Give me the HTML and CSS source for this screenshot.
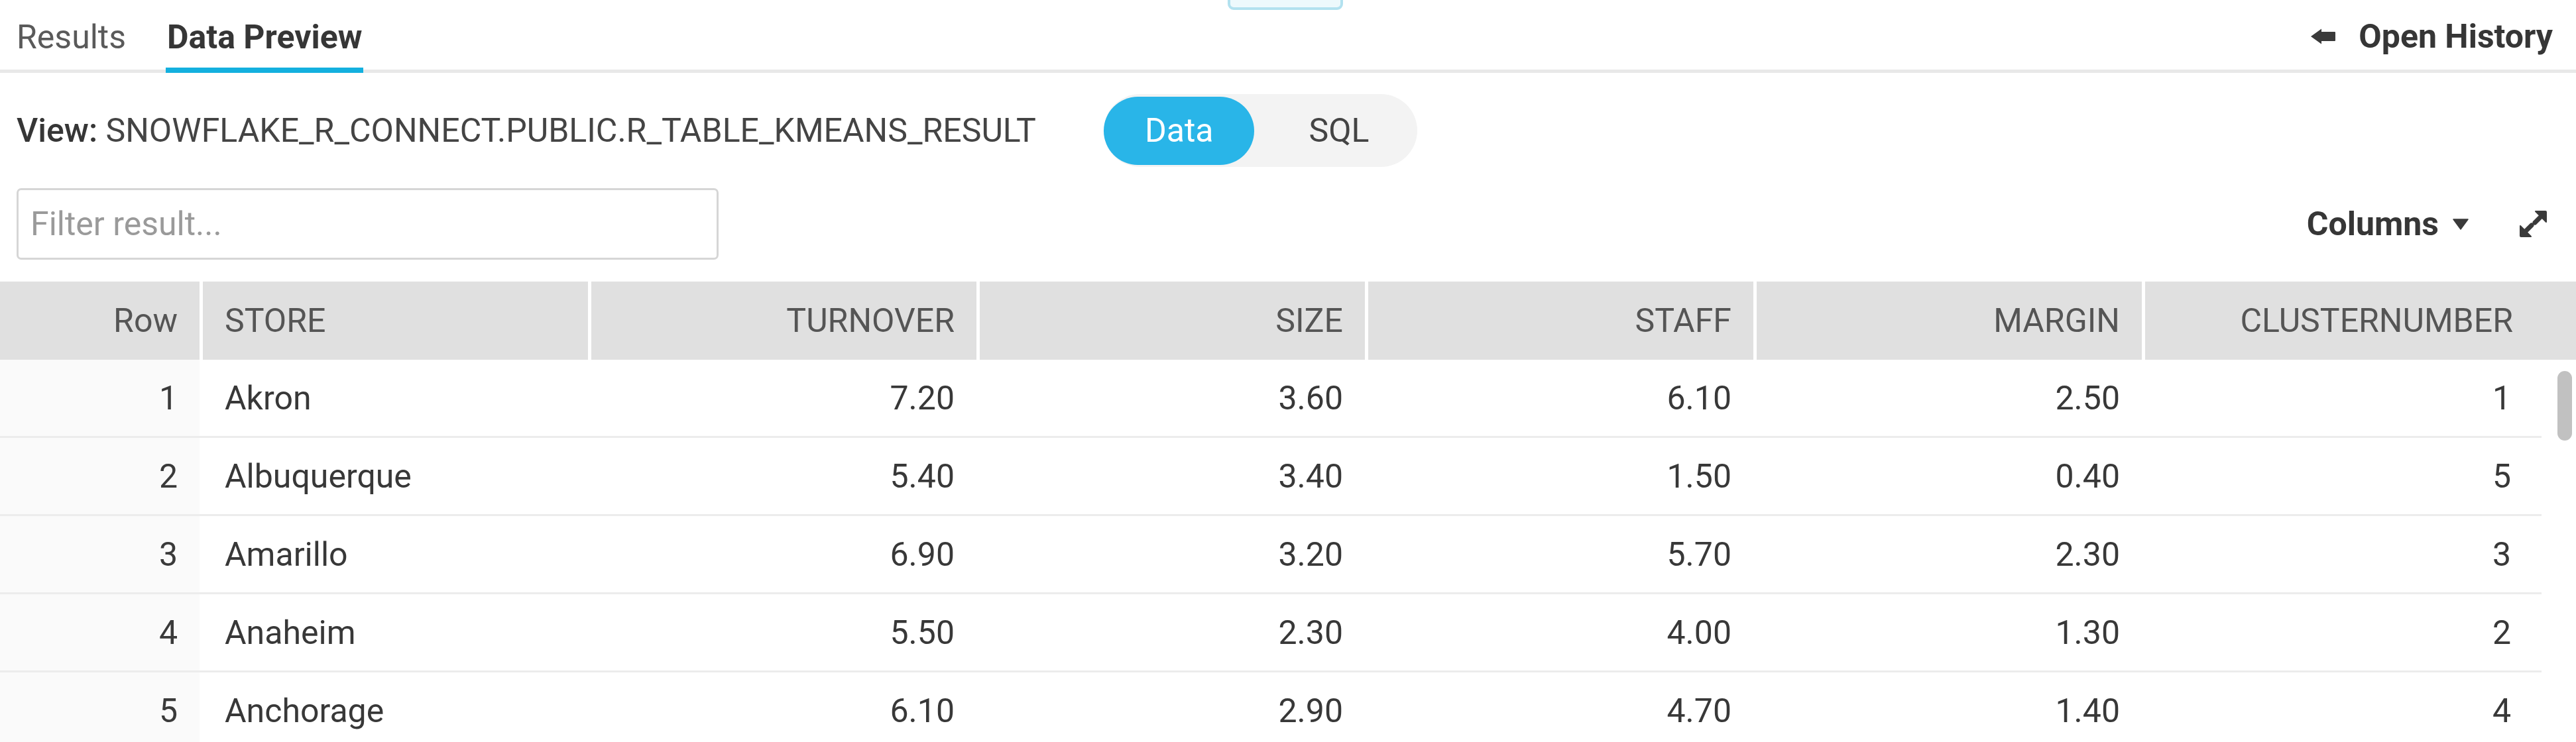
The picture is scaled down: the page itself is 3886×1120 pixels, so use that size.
FILE: index.html
```html
<!DOCTYPE html>
<html lang="en">
<head>
<meta charset="utf-8">
<title>Data Preview</title>
<link rel="stylesheet" href="styles.css">
</head>
<body>
<div class="app">
  <div class="tip"></div>

  <div class="tabs">
    <div class="tab-list">
      <div class="tab">Results</div>
      <div class="tab active">Data Preview</div>
    </div>
    <div class="history">
      <svg class="arrow" viewBox="0 0 38 26" width="38" height="26"><path d="M1 13 L17 1.5 L17 6 L37 6 Q38 6 38 7 L38 19 Q38 20 37 20 L17 20 L17 24.5 Z" fill="#3a3a3a"/></svg>
      <span>Open History</span>
    </div>
  </div>

  <div class="viewbar">
    <div class="view-label"><span class="view-key">View:</span> SNOWFLAKE_R_CONNECT.PUBLIC.R_TABLE_KMEANS_RESULT</div>
    <div class="toggle">
      <span class="seg on">Data</span>
      <span class="seg sql">SQL</span>
    </div>
  </div>

  <div class="toolbar">
    <input class="filter" type="text" placeholder="Filter result...">
    <div class="tools">
      <div class="columns">
        <span>Columns</span>
        <svg viewBox="0 0 24 17" width="24" height="17"><path d="M1 1 L23 1 L12 16 Z" fill="#3a3a3a" stroke="#3a3a3a" stroke-width="1.5" stroke-linejoin="round"/></svg>
      </div>
      <svg class="expand" viewBox="0 0 41 40" width="41" height="40">
        <path d="M24 1 L39 1 Q40 1 40 2 L40 17 Z" fill="#3a3a3a" stroke="#3a3a3a" stroke-width="2" stroke-linejoin="round"/>
        <line x1="33" y1="8" x2="23" y2="18" stroke="#3a3a3a" stroke-width="7" stroke-linecap="round"/>
        <path d="M1 23 L1 38 Q1 39 2 39 L17 39 Z" fill="#3a3a3a" stroke="#3a3a3a" stroke-width="2" stroke-linejoin="round"/>
        <line x1="8" y1="32" x2="18" y2="22" stroke="#3a3a3a" stroke-width="7" stroke-linecap="round"/>
      </svg>
    </div>
  </div>

  <div class="table">
    <div class="thead">
      <div class="th num">Row</div>
      <div class="th">STORE</div>
      <div class="th num">TURNOVER</div>
      <div class="th num">SIZE</div>
      <div class="th num">STAFF</div>
      <div class="th num">MARGIN</div>
      <div class="th num">CLUSTERNUMBER</div>
    </div>
    <div class="tbody">
      <div class="tr"><div class="td rn">1</div><div class="td txt">Akron</div><div class="td">7.20</div><div class="td">3.60</div><div class="td">6.10</div><div class="td">2.50</div><div class="td">1</div></div>
      <div class="tr"><div class="td rn">2</div><div class="td txt">Albuquerque</div><div class="td">5.40</div><div class="td">3.40</div><div class="td">1.50</div><div class="td">0.40</div><div class="td">5</div></div>
      <div class="tr"><div class="td rn">3</div><div class="td txt">Amarillo</div><div class="td">6.90</div><div class="td">3.20</div><div class="td">5.70</div><div class="td">2.30</div><div class="td">3</div></div>
      <div class="tr"><div class="td rn">4</div><div class="td txt">Anaheim</div><div class="td">5.50</div><div class="td">2.30</div><div class="td">4.00</div><div class="td">1.30</div><div class="td">2</div></div>
      <div class="tr"><div class="td rn">5</div><div class="td txt">Anchorage</div><div class="td">6.10</div><div class="td">2.90</div><div class="td">4.70</div><div class="td">1.40</div><div class="td">4</div></div>
      <div class="thumb"></div>
    </div>
  </div>
</div>
</body>
</html>
```

FILE: styles.css
```css
html, body {
  margin: 0;
  padding: 0;
  overflow: hidden;
  background: #ffffff;
}

body {
  width: 3886px;
  height: 1120px;
  font-family: Roboto, "Liberation Sans", Arial, sans-serif;
  font-size: 50px;
  color: #383838;
}

.app {
  position: relative;
}

/* partially visible popover at top */
.tip {
  position: absolute;
  left: 1852px;
  top: -30px;
  width: 174px;
  height: 45px;
  box-sizing: border-box;
  border: 4px solid #b2e1ef;
  border-radius: 9px;
  background: #edf9fc;
}

/* ---------- tabs ---------- */
.tabs {
  display: flex;
  justify-content: space-between;
  align-items: stretch;
  height: 105px;
  border-bottom: 5px solid #e8e8e8;
  padding: 0 35px 0 25px;
}

.tab-list {
  display: flex;
  gap: 62px;
}

.tab {
  position: relative;
  display: flex;
  align-items: center;
  padding-top: 6px;
  color: #5a5a5a;
}

.tab.active {
  font-weight: 700;
  color: #363636;
}

.tab.active::after {
  content: "";
  position: absolute;
  left: -2px;
  right: -2px;
  bottom: -5px;
  height: 8px;
  background: #13b0df;
}

.history {
  display: flex;
  align-items: center;
  gap: 35px;
  padding-top: 4px;
  font-weight: 700;
  color: #363636;
}

/* ---------- view line ---------- */
.viewbar {
  display: flex;
  align-items: center;
  gap: 102px;
  padding: 32px 25px 0;
}

.view-label {
  white-space: nowrap;
  color: #444444;
}

.view-key {
  font-weight: 500;
  color: #363636;
}

.toggle {
  display: flex;
  align-items: center;
  height: 110px;
  border-radius: 55px;
  background: #f3f3f3;
}

.seg {
  display: flex;
  align-items: center;
  height: 103px;
  padding: 0 62px;
  border-radius: 52px;
  color: #444444;
}

.seg.on {
  background: #29b5e8;
  color: #ffffff;
}

.seg.sql {
  padding: 0 72px 0 82px;
}

/* ---------- toolbar ---------- */
.toolbar {
  display: flex;
  justify-content: space-between;
  align-items: center;
  padding: 32px 44px 33px 25px;
}

.filter {
  width: 1059px;
  height: 108px;
  box-sizing: border-box;
  border: 3px solid #d6d6d6;
  border-radius: 7px;
  padding: 0 18px;
  font: inherit;
  color: #333333;
  outline: none;
}

.filter::placeholder {
  color: #9a9a9a;
}

.tools {
  display: flex;
  align-items: center;
  gap: 77px;
}

.columns {
  display: flex;
  align-items: center;
  gap: 21px;
  font-weight: 700;
  color: #363636;
}

.expand {
  display: block;
}

/* ---------- table ---------- */
.thead {
  display: grid;
  grid-template-columns: 301px repeat(5, 581px) 1fr;
  column-gap: 5px;
  height: 118px;
}

.th {
  display: flex;
  align-items: center;
  padding: 0 33px;
  background: #e0e0e0;
  color: #555555;
}

.th.num {
  justify-content: flex-end;
}

.th:last-child {
  padding-right: 95px;
}

.tbody {
  position: relative;
}

.tr {
  display: grid;
  grid-template-columns: 301px repeat(5, 581px) 1fr;
  column-gap: 5px;
  width: 3834px;
  height: 115px;
  border-bottom: 3px solid #ececec;
}

.td {
  display: flex;
  align-items: center;
  justify-content: flex-end;
  padding: 0 33px;
  color: #383838;
}

.td.txt {
  justify-content: flex-start;
}

.td.rn {
  background: #fafafa;
  color: #3a3a3a;
}

.td:last-child {
  padding-right: 46px;
}

.thumb {
  position: absolute;
  top: 17px;
  right: 6px;
  width: 22px;
  height: 105px;
  border-radius: 11px;
  background: #c1c1c1;
}
```
